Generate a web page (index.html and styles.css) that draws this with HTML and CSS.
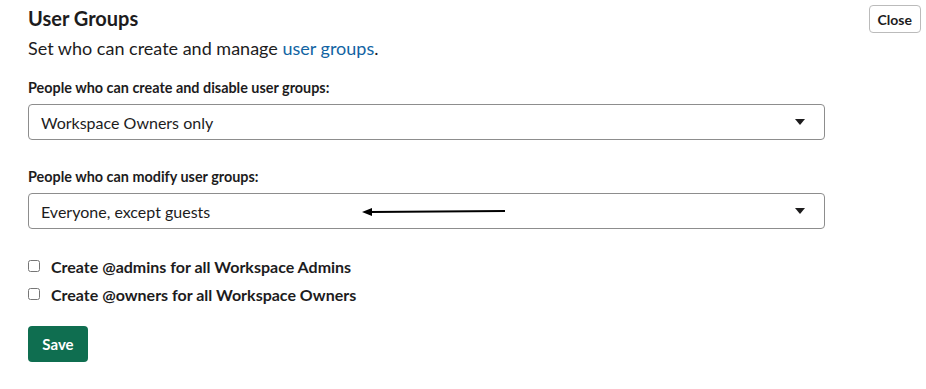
FILE: index.html
```html
<!DOCTYPE html>
<html lang="en">
<head>
  <meta charset="UTF-8">
  <meta name="viewport" content="width=device-width, initial-scale=1.0">
  <title>User Groups</title>
  <link rel="stylesheet" href="styles.css">
</head>
<body>
  <div class="page">
    <div class="head">
      <div class="title">User Groups</div>
      <button class="close">Close</button>
    </div>
    <div class="sub">Set who can create and manage <a href="#">user groups</a>.</div>

    <div class="field">
      <label class="lbl">People who can create and disable user groups:</label>
      <div class="select">
        <span>Workspace Owners only</span>
        <span class="caret"></span>
      </div>
    </div>

    <div class="field">
      <label class="lbl">People who can modify user groups:</label>
      <div class="select">
        <span>Everyone, except guests</span>
        <svg class="arrow" width="144" height="10" viewBox="0 0 144 10">
          <line x1="8" y1="5" x2="143" y2="4" stroke="#000" stroke-width="2"/>
          <polygon points="0,5 10,1 10,9" fill="#000"/>
        </svg>
        <span class="caret"></span>
      </div>
    </div>

    <div class="checks">
      <label class="check"><input type="checkbox"> Create @admins for all Workspace Admins</label>
      <label class="check"><input type="checkbox"> Create @owners for all Workspace Owners</label>
    </div>

    <button class="save">Save</button>
  </div>
</body>
</html>
```

FILE: styles.css
```css
body {
    margin: 0;
    font-family: Lato, "Noto Sans", sans-serif;
    color: #1d1c1d;
    background: #fff;
}

.page {
    padding: 5px 5px 0 28px;
}

.head {
    display: flex;
    justify-content: space-between;
    align-items: flex-start;
    height: 28px;
}

.title {
    font-size: 20px;
    line-height: 26px;
    font-weight: 700;
}

.close {
    font-family: inherit;
    font-size: 14px;
    font-weight: 700;
    color: #1d1c1d;
    background: #fff;
    border: 1px solid #bbbbbb;
    border-radius: 4px;
    height: 28px;
    padding: 0 8px;
}

.sub {
    font-size: 18px;
    line-height: 22px;
    margin-top: 4px;
}

.sub a {
    color: #1264a3;
    text-decoration: none;
}

.field {
    margin-top: 20px;
    width: 797px;
}

.field + .field {
    margin-top: 28px;
}

.lbl {
    display: block;
    font-size: 14.4px;
    line-height: 18px;
    font-weight: 700;
    margin-bottom: 7px;
}

.select {
    position: relative;
    display: flex;
    justify-content: space-between;
    align-items: center;
    height: 36px;
    box-sizing: border-box;
    border: 1px solid #8d8d8d;
    border-radius: 4px;
    padding: 0 19px 0 12px;
    font-size: 16px;
}

.caret {
    width: 0;
    height: 0;
    border-left: 5.5px solid transparent;
    border-right: 5.5px solid transparent;
    border-top: 6px solid #1d1c1d;
}

.arrow {
    position: absolute;
    left: 333px;
    top: 13px;
}

.checks {
    margin-top: 27px;
    display: flex;
    flex-direction: column;
    gap: 8px;
}

.check {
    display: flex;
    align-items: center;
    font-size: 16px;
    font-weight: 700;
    height: 20px;
}

.check input {
    margin: 0 11px 0 0;
    width: 12px;
    height: 12px;
}

.save {
    margin-top: 22px;
    font-family: inherit;
    font-size: 15px;
    font-weight: 700;
    color: #fff;
    background: #0f6e50;
    border: none;
    border-radius: 4px;
    width: 60px;
    height: 36px;
}
```
